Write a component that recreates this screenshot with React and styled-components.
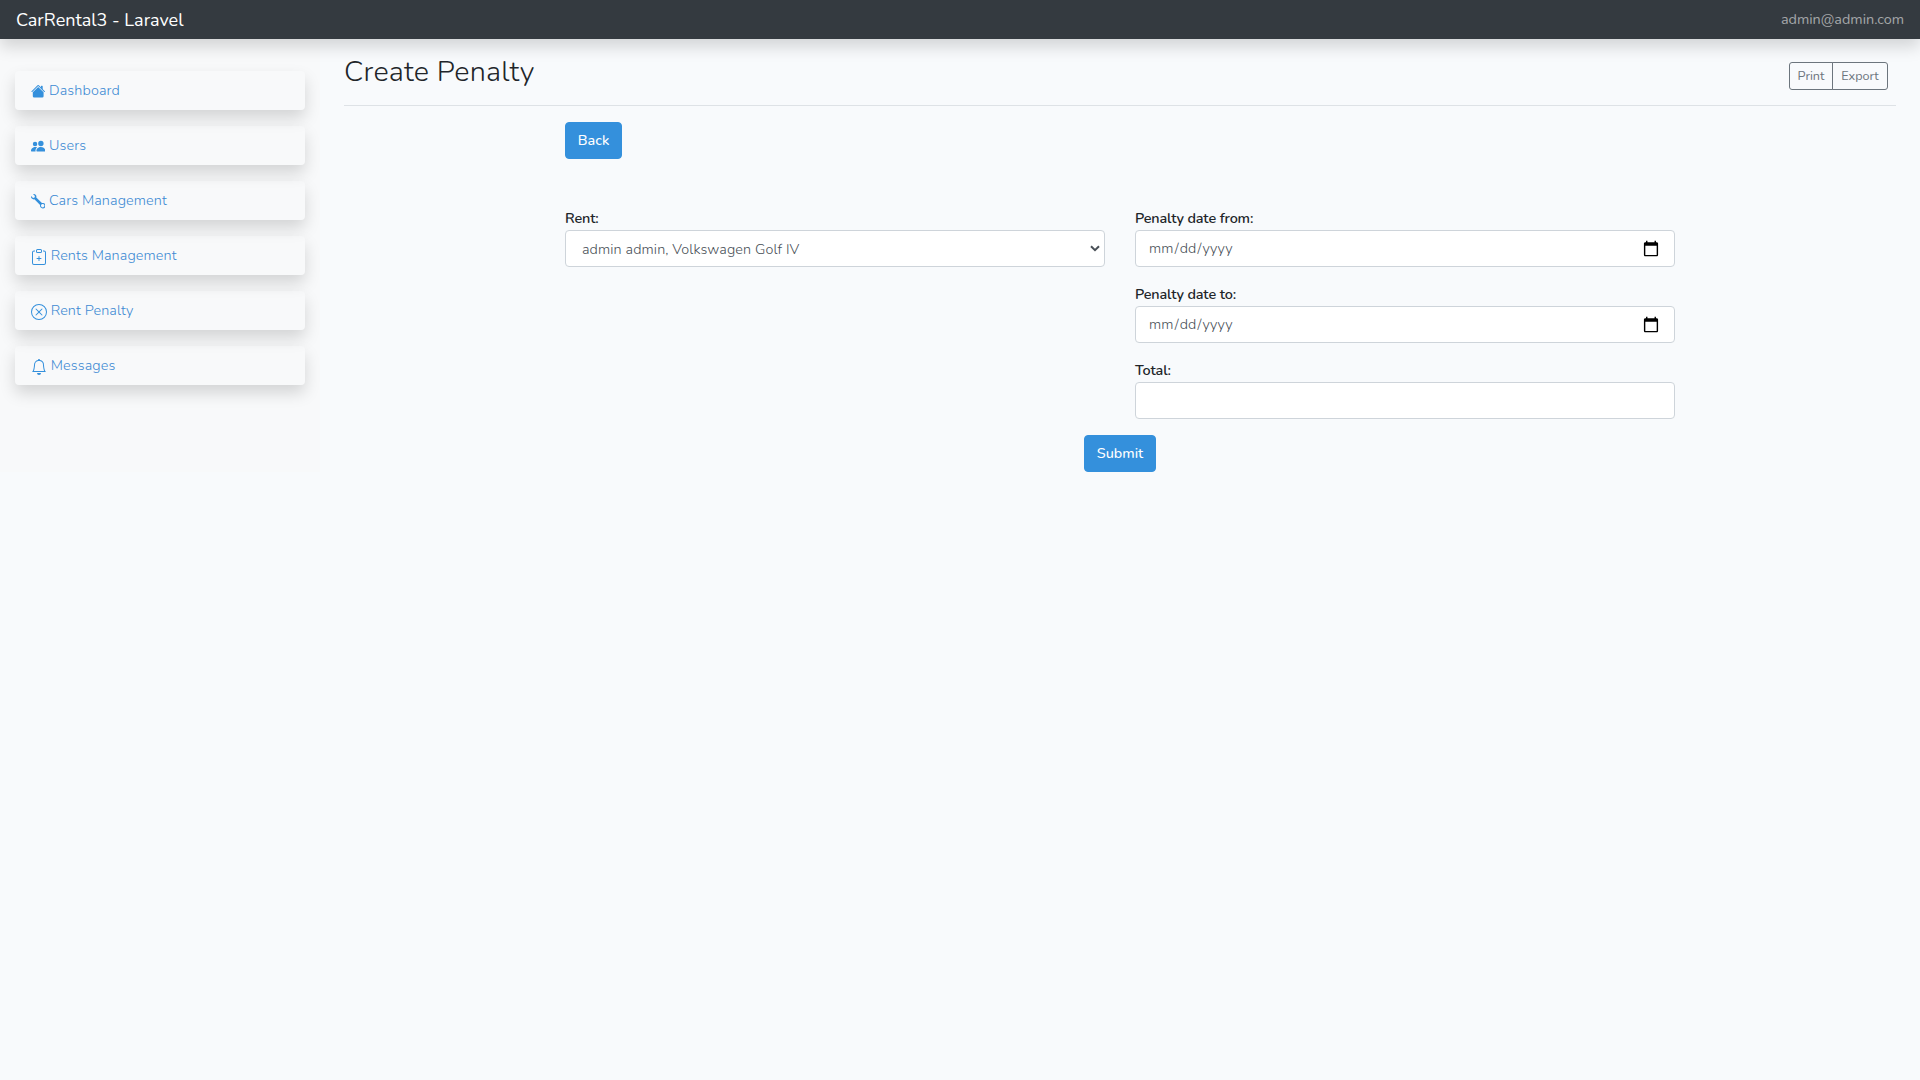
import React from "react";
import styled, { createGlobalStyle } from "styled-components";
import { BsWrench, BsClipboardPlus, BsXCircle, BsBell } from "react-icons/bs";

const GlobalStyle = createGlobalStyle`
  *, *::before, *::after { box-sizing: border-box; }
  body {
    margin: 0;
    background: #f8fafc;
    color: #212529;
    font-family: Nunito, Lato, "Open Sans", sans-serif;
    font-size: 14.4px;
    line-height: 23px;
  }
`;

const Navbar = styled.nav`
  position: relative;
  z-index: 2;
  display: flex;
  align-items: center;
  justify-content: space-between;
  height: 39px;
  padding: 0 16px;
  background: #343a40;
  box-shadow: 0 8px 16px rgba(0, 0, 0, 0.15);
`;

const Brand = styled.a`
  padding-top: 2px;
  color: #fff;
  font-size: 18px;
`;

const Account = styled.a`
  color: rgba(255, 255, 255, 0.56);
`;

const Page = styled.div`
  display: flex;
  align-items: flex-start;
`;

const Sidebar = styled.aside`
  display: flex;
  flex: none;
  flex-direction: column;
  gap: 16px;
  width: 320px;
  height: 433px;
  padding: 32px 15px 0;
  background: #f8f9fa;
`;

const NavCard = styled.a`
  display: flex;
  align-items: center;
  gap: 3.7px;
  width: 290px;
  height: 39px;
  padding: 0 16px;
  border-radius: 4px;
  box-shadow: 0 8px 16px rgba(0, 0, 0, 0.15);
  color: #3490dc;

  svg {
    flex: none;
    width: ${(p) => p.$icon}px;
    height: ${(p) => p.$icon}px;
    margin-top: 2px;
  }
`;

const NavText = styled.span`
  color: #3d8ad3;
  font-weight: 350;
  letter-spacing: 0.11px;
`;

const Main = styled.main`
  flex: 1;
  padding: 16px 24px 0;
`;

const TitleBar = styled.header`
  display: flex;
  align-items: center;
  justify-content: space-between;
  height: 51px;
  padding-bottom: 8px;
  margin-bottom: 16px;
  border-bottom: 1px solid #dee2e6;
`;

const Title = styled.h1`
  margin: 0 0 8px;
  font-size: 28.8px;
  font-weight: 300;
  line-height: 34.5px;
  letter-spacing: 0.23px;
`;

const ButtonGroup = styled.div`
  display: flex;
  margin-right: 8px;
`;

const OutlineButton = styled.button`
  height: 28px;
  padding: 0 0 2px;
  border: 1px solid #6c757d;
  background: transparent;
  color: #6c757d;
  font: 12.6px/19px Nunito, Lato, sans-serif;

  &:first-child { border-radius: 3px 0 0 3px; width: 44px; }
  &:last-child { border-radius: 0 3px 3px 0; margin-left: -1px; width: 56px; }
`;

const Container = styled.div`
  display: flex;
  flex-direction: column;
  width: 1140px;
  margin: 0 auto;
  padding: 0 15px;
`;

const PrimaryButton = styled.button`
  align-self: ${(p) => (p.$center ? "center" : "flex-start")};
  width: ${(p) => p.$width}px;
  height: 37px;
  padding: 0;
  border: 1px solid #3490dc;
  border-radius: 4px;
  background: #3490dc;
  color: #fff;
  font: 500 14.4px/23px Nunito, Lato, sans-serif;
`;

const Columns = styled.div`
  display: grid;
  grid-template-columns: 1fr 1fr;
  gap: 30px;
  margin-top: 48px;
`;

const Column = styled.div`
  display: flex;
  flex-direction: column;
`;

const Field = styled.label`
  display: flex;
  flex-direction: column;
  margin-bottom: 16px;
`;

const FieldName = styled.span`
  height: 23px;
  font-weight: 600;
  letter-spacing: -0.14px;
`;

const Input = styled.input`
  width: 100%;
  height: 37px;
  padding: 6px 12px;
  border: 1px solid #ced4da;
  border-radius: 4px;
  background: #fff;
  color: #495057;
  font: 350 14.4px/23px Nunito, Lato, sans-serif;
  letter-spacing: 0.12px;

  &::-webkit-calendar-picker-indicator {
    width: 18px;
    height: 18px;
  }
`;

const SelectBox = styled.div`
  display: grid;
  align-items: center;

  select, svg { grid-area: 1 / 1; }

  svg {
    justify-self: end;
    width: 10px;
    height: 7px;
    margin-right: 5px;
    pointer-events: none;
  }
`;

const Select = styled.select`
  appearance: none;
  width: 100%;
  height: 37px;
  padding: 7px 16px 5px;
  border: 1px solid #ced4da;
  border-radius: 4px;
  background: #fff;
  color: #495057;
  font: 350 14.4px/23px Nunito, Lato, sans-serif;
  letter-spacing: 0.11px;
`;

const HouseIcon = () => (
  <svg viewBox="0 0 16 16" fill="currentColor">
    <path d="M8 3.293l6 6V13.5a1.5 1.5 0 0 1-1.5 1.5h-9A1.5 1.5 0 0 1 2 13.5V9.293l6-6zm5-.793V6l-2-2V2.5a.5.5 0 0 1 .5-.5h1a.5.5 0 0 1 .5.5z" />
    <path d="M7.293 1.5a1 1 0 0 1 1.414 0l6.647 6.646a.5.5 0 0 1-.708.708L8 2.207 1.354 8.854a.5.5 0 1 1-.708-.708L7.293 1.5z" />
  </svg>
);

const PeopleIcon = () => (
  <svg viewBox="0 0 16 16" fill="currentColor">
    <path d="M7 14s-1 0-1-1 1-4 5-4 5 3 5 4-1 1-1 1H7zm4-6a3 3 0 1 0 0-6 3 3 0 0 0 0 6z" />
    <path d="M5.216 14A2.238 2.238 0 0 1 5 13c0-1.355.68-2.75 1.936-3.72A6.325 6.325 0 0 0 5 9c-4 0-5 3-5 4s1 1 1 1h4.216z" />
    <path d="M4.5 8a2.5 2.5 0 1 0 0-5 2.5 2.5 0 0 0 0 5z" />
  </svg>
);

const links = [
  { label: "Dashboard", Icon: HouseIcon, icon: 14.4 },
  { label: "Users", Icon: PeopleIcon, icon: 14.4 },
  { label: "Cars Management", Icon: BsWrench, icon: 14.4 },
  { label: "Rents Management", Icon: BsClipboardPlus, icon: 16 },
  { label: "Rent Penalty", Icon: BsXCircle, icon: 16 },
  { label: "Messages", Icon: BsBell, icon: 16 },
];

export default function App() {
  return (
    <>
      <GlobalStyle />
      <Navbar>
        <Brand>CarRental3 - Laravel</Brand>
        <Account>admin@admin.com</Account>
      </Navbar>
      <Page>
        <Sidebar>
          {links.map(({ label, Icon, icon }) => (
            <NavCard key={label} $icon={icon}>
              <Icon />
              <NavText>{label}</NavText>
            </NavCard>
          ))}
        </Sidebar>
        <Main>
          <TitleBar>
            <Title>Create Penalty</Title>
            <ButtonGroup>
              <OutlineButton>Print</OutlineButton>
              <OutlineButton>Export</OutlineButton>
            </ButtonGroup>
          </TitleBar>
          <Container>
            <PrimaryButton $width={57}>Back</PrimaryButton>
            <Columns>
              <Column>
                <Field>
                  <FieldName>Rent:</FieldName>
                  <SelectBox>
                    <Select>
                      <option>admin admin, Volkswagen Golf IV</option>
                    </Select>
                    <svg viewBox="0 0 10 7" fill="none" stroke="#495057" strokeWidth="2">
                      <path d="M1 1.2 5 5.2 9 1.2" />
                    </svg>
                  </SelectBox>
                </Field>
              </Column>
              <Column>
                <Field>
                  <FieldName>Penalty date from:</FieldName>
                  <Input type="date" />
                </Field>
                <Field>
                  <FieldName>Penalty date to:</FieldName>
                  <Input type="date" />
                </Field>
                <Field>
                  <FieldName>Total:</FieldName>
                  <Input type="text" />
                </Field>
              </Column>
            </Columns>
            <PrimaryButton $center $width={72}>Submit</PrimaryButton>
          </Container>
        </Main>
      </Page>
    </>
  );
}
